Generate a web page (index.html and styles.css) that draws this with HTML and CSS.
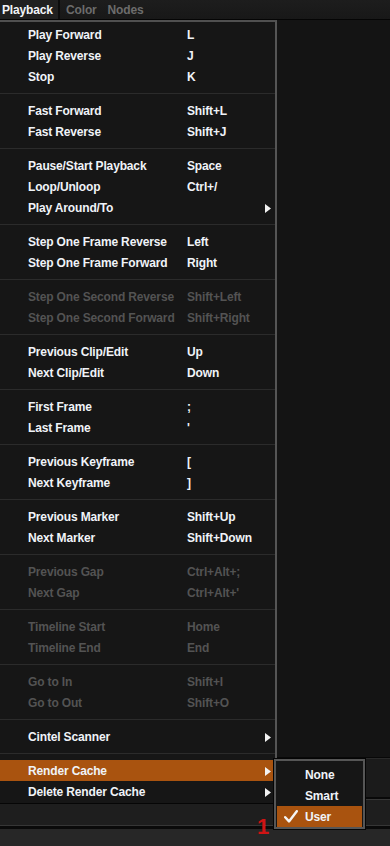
FILE: index.html
```html
<!DOCTYPE html>
<html>
<head>
<meta charset="utf-8">
<link rel="stylesheet" href="styles.css">
</head>
<body>
<div class="page">
  <div class="topbar">
    <span class="tab active">Playback</span>
    <span class="tab t-color">Color</span>
    <span class="tab t-nodes">Nodes</span>
  </div>
  <div class="area"></div>
  <div class="band band1"></div>
  <div class="band band2"></div>
  <div class="band band3"></div>

  <div class="menu">
    <div class="row"><span>Play Forward</span><span>L</span></div>
    <div class="row"><span>Play Reverse</span><span>J</span></div>
    <div class="row"><span>Stop</span><span>K</span></div>
    <div class="sep"></div>
    <div class="row"><span>Fast Forward</span><span>Shift+L</span></div>
    <div class="row"><span>Fast Reverse</span><span>Shift+J</span></div>
    <div class="sep"></div>
    <div class="row"><span>Pause/Start Playback</span><span>Space</span></div>
    <div class="row"><span>Loop/Unloop</span><span>Ctrl+/</span></div>
    <div class="row"><span>Play Around/To</span><span></span><svg class="arrow" viewBox="0 0 6 9"><polygon points="0,0 6,4.5 0,9" fill="#f2f2f2"/></svg></div>
    <div class="sep"></div>
    <div class="row"><span>Step One Frame Reverse</span><span>Left</span></div>
    <div class="row"><span>Step One Frame Forward</span><span>Right</span></div>
    <div class="sep"></div>
    <div class="row dis"><span>Step One Second Reverse</span><span>Shift+Left</span></div>
    <div class="row dis"><span>Step One Second Forward</span><span>Shift+Right</span></div>
    <div class="sep"></div>
    <div class="row"><span>Previous Clip/Edit</span><span>Up</span></div>
    <div class="row"><span>Next Clip/Edit</span><span>Down</span></div>
    <div class="sep"></div>
    <div class="row"><span>First Frame</span><span>;</span></div>
    <div class="row"><span>Last Frame</span><span>'</span></div>
    <div class="sep"></div>
    <div class="row"><span>Previous Keyframe</span><span>[</span></div>
    <div class="row"><span>Next Keyframe</span><span>]</span></div>
    <div class="sep"></div>
    <div class="row"><span>Previous Marker</span><span>Shift+Up</span></div>
    <div class="row"><span>Next Marker</span><span>Shift+Down</span></div>
    <div class="sep"></div>
    <div class="row dis"><span>Previous Gap</span><span>Ctrl+Alt+;</span></div>
    <div class="row dis"><span>Next Gap</span><span>Ctrl+Alt+'</span></div>
    <div class="sep"></div>
    <div class="row dis"><span>Timeline Start</span><span>Home</span></div>
    <div class="row dis"><span>Timeline End</span><span>End</span></div>
    <div class="sep"></div>
    <div class="row dis"><span>Go to In</span><span>Shift+I</span></div>
    <div class="row dis"><span>Go to Out</span><span>Shift+O</span></div>
    <div class="sep"></div>
    <div class="row"><span>Cintel Scanner</span><span></span><svg class="arrow" viewBox="0 0 6 9"><polygon points="0,0 6,4.5 0,9" fill="#f2f2f2"/></svg></div>
    <div class="sep"></div>
    <div class="row hl"><span>Render Cache</span><span></span><svg class="arrow" viewBox="0 0 6 9"><polygon points="0,0 6,4.5 0,9" fill="#f2f2f2"/></svg></div>
    <div class="row"><span>Delete Render Cache</span><span></span><svg class="arrow" viewBox="0 0 6 9"><polygon points="0,0 6,4.5 0,9" fill="#f2f2f2"/></svg></div>
  </div>

  <div class="submenu">
    <div class="subrow">None</div>
    <div class="subrow">Smart</div>
    <div class="subrow hl"><svg class="check" viewBox="0 0 14 13"><path d="M1.2 7.2 L5 11.4 L12.8 1.2" fill="none" stroke="#f4f4f4" stroke-width="2.4" stroke-linecap="round" stroke-linejoin="round"/></svg>User</div>
  </div>

  <div class="marker">1</div>
</div>
</body>
</html>
```

FILE: styles.css
```css
* { box-sizing: border-box; }
html, body { margin: 0; padding: 0; background: #141414; }
body {
  font-family: "Liberation Sans", Arial, sans-serif;
  font-weight: bold;
  font-size: 12px;
  letter-spacing: -0.15px;
}
.page {
  position: relative;
  width: 390px;
  height: 846px;
  display: flex;
  flex-direction: column;
  overflow: hidden;
}
.topbar {
  height: 20px;
  flex: none;
  display: flex;
  align-items: stretch;
  background: linear-gradient(#1d1d1d, #181818);
  border-bottom: 1px solid #050505;
}
.tab {
  line-height: 20px;
  color: #6c6c6c;
}
.tab.active {
  color: #f2f4f8;
  background: #202020;
  width: 60px;
  padding-left: 2px;
  border-right: 2px solid #0c0c0c;
}
.t-color { margin-left: 6px; }
.t-nodes { margin-left: 11px; }
.area { flex: 1; background: #141414; }
.band { flex: none; }
.band1 {
  height: 40px;
  background: #1b1b1b;
  border-top: 1px solid #080808;
  box-shadow: inset 0 1px 0 #2a2a2a;
}
.band2 {
  height: 29px;
  background: #1e1e1e;
  border-top: 2px solid #090909;
  box-shadow: inset 0 1px 0 #383838;
}
.band3 {
  height: 20px;
  background: #272727;
  border-top: 3px solid #0a0a0a;
  box-shadow: 0 -1px 0 #363636;
}
.menu {
  position: absolute;
  left: 0;
  top: 20px;
  width: 277px;
  background: #161616;
  border-top: 2px solid #505050;
  border-right: 2px solid #555;
  padding: 2px 0 1px;
  box-shadow: 0 1px 0 #060606;
}
.row {
  height: 21px;
  line-height: 19px;
  padding-top: 2px;
  display: grid;
  grid-template-columns: 159px 1fr 6px;
  align-items: start;
  padding-left: 28px;
  padding-right: 4px;
  color: #f0f3f8;
  white-space: nowrap;
}
.row.dis { color: #535353; }
.row.hl { background: #a9530f; }
.arrow { width: 6px; height: 9px; display: block; align-self: center; margin-top: -1px; }
.sep {
  height: 13px;
  position: relative;
}
.sep::after {
  content: "";
  position: absolute;
  left: 0;
  right: 0;
  top: 6px;
  height: 1px;
  background: #2b2b2b;
}
.submenu {
  position: absolute;
  left: 274px;
  top: 759px;
  width: 91px;
  height: 70px;
  background: #161616;
  border: 2px solid #565656;
  box-shadow: 0 0 0 1px #050505;
  padding: 3px 1px 0;
}
.subrow {
  position: relative;
  height: 21px;
  line-height: 19px;
  padding-top: 2px;
  padding-left: 28px;
  color: #f0f3f8;
}
.subrow.hl { background: #a9530f; }
.check {
  position: absolute;
  left: 7px;
  top: 4px;
  width: 14px;
  height: 13px;
}
.marker {
  position: absolute;
  left: 257px;
  top: 814px;
  font-family: "Liberation Sans", Arial, sans-serif;
  font-weight: bold;
  font-size: 22px;
  color: #d01414;
  letter-spacing: 0;
}
```
